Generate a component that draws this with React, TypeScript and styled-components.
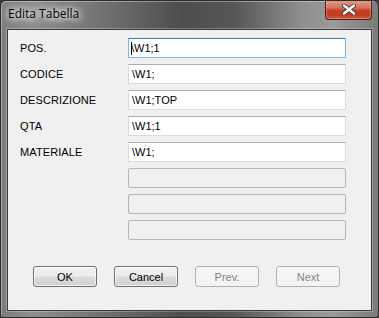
import React from "react";
import styled, { createGlobalStyle } from "styled-components";

const Global = createGlobalStyle`
  html, body {
    margin: 0;
    padding: 0;
    background: #3a3a3a;
  }
  body {
    font-family: "Liberation Sans", Arial, sans-serif;
  }
`;

const Window = styled.div`
  box-sizing: border-box;
  width: 379px;
  height: 318px;
  display: flex;
  flex-direction: column;
  border: 1px solid #2c2c2c;
  border-radius: 6px 6px 3px 3px;
  background: linear-gradient(
    90deg,
    #7c7c7c 0%,
    #8e8e8e 8%,
    #7a7a7a 22%,
    #4d4d4d 48%,
    #575757 62%,
    #8f8f8f 80%,
    #9a9a9a 88%,
    #7a7a7a 100%
  );
  box-shadow: inset 1px 1px 0 rgba(255, 255, 255, 0.35);
  overflow: hidden;
`;

const TitleBar = styled.div`
  position: relative;
  height: 28px;
  display: flex;
  align-items: center;
  padding-left: 7px;
`;

const Title = styled.span`
  font-family: "Open Sans", "Liberation Sans", sans-serif;
  font-size: 12px;
  color: #000;
  margin-top: -3px;
  text-shadow: 0 0 6px #fff, 0 0 8px rgba(255, 255, 255, 0.9), 0 0 10px rgba(255, 255, 255, 0.7);
`;

const CloseButton = styled.div`
  position: absolute;
  top: -1px;
  right: 6px;
  width: 45px;
  height: 19px;
  display: flex;
  align-items: center;
  justify-content: center;
  border: 1px solid #4a2018;
  border-top: none;
  border-radius: 0 0 4px 4px;
  background: linear-gradient(180deg, #e0a08e 0%, #d4735c 40%, #c5442a 55%, #c23a20 80%, #d2633f 100%);
  box-shadow: inset 0 0 0 1px rgba(255, 200, 180, 0.35);
`;

const Client = styled.div`
  flex: 1;
  margin: 0 6px 6px 6px;
  border: 1px solid #3a3a3a;
  background: #f0f0f0;
  padding: 8px 0 0 12px;
  box-shadow: 0 0 0 1px rgba(255, 255, 255, 0.25);
`;

const Form = styled.div`
  display: grid;
  grid-template-columns: 108px 218px;
  grid-auto-rows: 20px;
  row-gap: 6px;
  align-items: center;
`;

const Label = styled.span`
  font-size: 11px;
  color: #000;
  grid-column: 1;
  letter-spacing: 0.1px;
`;

const Field = styled.div<{ $focused?: boolean; $disabled?: boolean }>`
  grid-column: 2;
  box-sizing: border-box;
  height: 20px;
  display: flex;
  align-items: center;
  padding-left: 3px;
  font-size: 11px;
  color: #000;
  background: ${(p) => (p.$disabled ? "#f0f0f0" : "#fff")};
  border: 1px solid ${(p) => (p.$disabled ? "#b5b5b5" : "#d9dbe1")};
  border-top-color: ${(p) => (p.$focused ? "#3d7bad" : p.$disabled ? "#b5b5b5" : "#abadb3")};
  ${(p) => (p.$focused ? "border-color: #7eb4ea; border-top-color: #3d7bad;" : "")}
  border-radius: ${(p) => (p.$disabled ? "2px" : "0")};
`;

const Caret = styled.span`
  display: inline-block;
  width: 1px;
  height: 13px;
  background: #000;
  margin-right: -1px;
  margin-left: -1px;
`;

const ButtonRow = styled.div`
  display: flex;
  gap: 17px;
  margin-top: 26px;
  padding-left: 13px;
`;

const Button = styled.div<{ $disabled?: boolean }>`
  box-sizing: border-box;
  width: 64px;
  height: 21px;
  display: flex;
  align-items: center;
  justify-content: center;
  font-size: 11px;
  border-radius: 3px;
  border: 1px solid ${(p) => (p.$disabled ? "#adb2b5" : "#707070")};
  color: ${(p) => (p.$disabled ? "#838383" : "#000")};
  background: ${(p) =>
    p.$disabled
      ? "#f4f4f4"
      : "linear-gradient(180deg, #f2f2f2 0%, #ebebeb 48%, #dddddd 52%, #cfcfcf 100%)"};
  box-shadow: ${(p) => (p.$disabled ? "none" : "inset 0 0 0 1px rgba(255,255,255,0.7)")};
`;

const labels = ["POS.", "CODICE", "DESCRIZIONE", "QTA", "MATERIALE"];
const values = ["\\W1;1", "\\W1;", "\\W1;TOP", "\\W1;1", "\\W1;"];

export default function App() {
  return (
    <>
      <Global />
      <Window>
        <TitleBar>
          <Title>Edita Tabella</Title>
          <CloseButton>
            <svg width="14" height="11" viewBox="0 0 14 11">
              <path
                d="M2 1.5 L12 9.5 M12 1.5 L2 9.5"
                stroke="#3a3a3a"
                strokeWidth="4.2"
                strokeLinecap="round"
              />
              <path d="M2 1.5 L12 9.5 M12 1.5 L2 9.5" stroke="#fff" strokeWidth="2.4" strokeLinecap="round" />
            </svg>
          </CloseButton>
        </TitleBar>
        <Client>
          <Form>
            {labels.map((l, i) => (
              <React.Fragment key={l}>
                <Label>{l}</Label>
                <Field $focused={i === 0}>
                  {i === 0 && <Caret />}
                  {values[i]}
                </Field>
              </React.Fragment>
            ))}
            <Field $disabled />
            <Field $disabled />
            <Field $disabled />
          </Form>
          <ButtonRow>
            <Button>OK</Button>
            <Button>Cancel</Button>
            <Button $disabled>Prev.</Button>
            <Button $disabled>Next</Button>
          </ButtonRow>
        </Client>
      </Window>
    </>
  );
}
